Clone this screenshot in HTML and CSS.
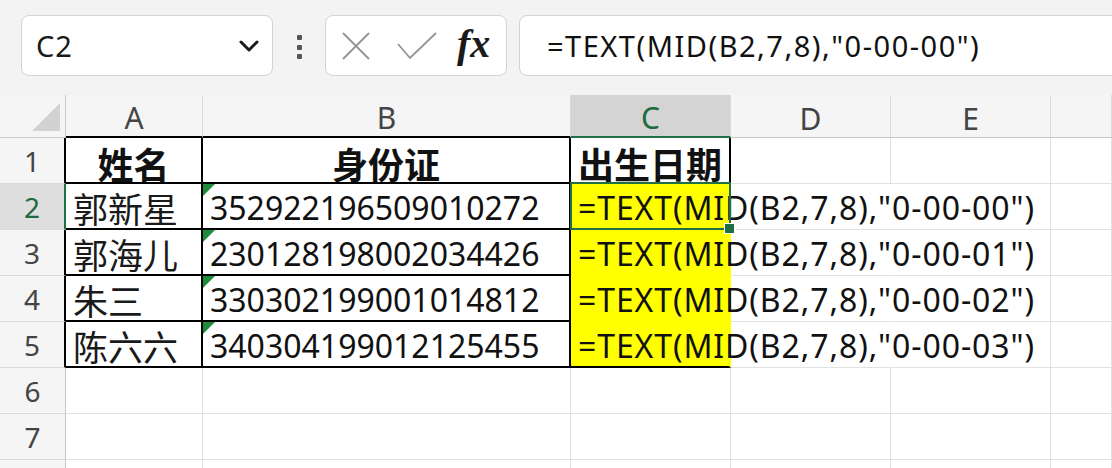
FILE: index.html
```html
<!DOCTYPE html>
<html lang="zh-CN">
<head>
<meta charset="utf-8">
<title>Sheet</title>
<link rel="stylesheet" href="styles.css">
</head>
<body>
<div class="app">
  <div class="toolbar">
    <div class="namebox">
      <span class="ref">C2</span>
      <svg class="chev" width="20" height="12" viewBox="0 0 20 12"><polyline points="2,2 10,10 18,2" fill="none" stroke="#1a1a1a" stroke-width="3" stroke-linecap="round" stroke-linejoin="round"/></svg>
    </div>
    <div class="dots"><i></i><i></i><i></i></div>
    <div class="fnbox">
      <svg class="ico-x" width="28" height="28" viewBox="0 0 28 28"><path d="M1 1L27 27M27 1L1 27" stroke="#949494" stroke-width="1.8" fill="none"/></svg>
      <svg class="ico-ok" width="40" height="28" viewBox="0 0 40 28"><polyline points="1,12 13,26 39,1" fill="none" stroke="#949494" stroke-width="1.8"/></svg>
      <span class="fx">fx</span>
    </div>
    <div class="formula">=TEXT(MID(B2,7,8),"0-00-00")</div>
  </div>

  <div class="sheet">
    <!-- header row -->
    <div class="cell corner"><svg width="28" height="28" viewBox="0 0 28 28"><polygon points="0,28 28,28 28,0" fill="#d2d2d2"/></svg></div>
    <div class="cell colhd blk">A</div>
    <div class="cell colhd blk">B</div>
    <div class="cell colhd sel">C</div>
    <div class="cell colhd">D</div>
    <div class="cell colhd">E</div>
    <div class="cell colhd"></div>

    <!-- row 1 -->
    <div class="cell rowhd blk">1</div>
    <div class="cell tb hd">姓名</div>
    <div class="cell tb hd">身份证</div>
    <div class="cell tb hd">出生日期</div>
    <div class="cell"></div>
    <div class="cell"></div>
    <div class="cell"></div>

    <!-- row 2 -->
    <div class="cell rowhd sel">2</div>
    <div class="cell tb zh">郭新星</div>
    <div class="cell tb num">352922196509010272</div>
    <div class="cell tb yellow cmid fml active">=TEXT(MID(B2,7,8),"0-00-00")</div>
    <div class="cell noright"></div>
    <div class="cell"></div>
    <div class="cell"></div>

    <!-- row 3 -->
    <div class="cell rowhd blk">3</div>
    <div class="cell tb zh">郭海儿</div>
    <div class="cell tb num">230128198002034426</div>
    <div class="cell tb yellow cmid fml">=TEXT(MID(B2,7,8),"0-00-01")</div>
    <div class="cell noright"></div>
    <div class="cell"></div>
    <div class="cell"></div>

    <!-- row 4 -->
    <div class="cell rowhd blk">4</div>
    <div class="cell tb zh">朱三</div>
    <div class="cell tb num">330302199001014812</div>
    <div class="cell tb yellow cmid fml">=TEXT(MID(B2,7,8),"0-00-02")</div>
    <div class="cell noright"></div>
    <div class="cell"></div>
    <div class="cell"></div>

    <!-- row 5 -->
    <div class="cell rowhd blk">5</div>
    <div class="cell tb zh">陈六六</div>
    <div class="cell tb num">340304199012125455</div>
    <div class="cell tb yellow clast fml">=TEXT(MID(B2,7,8),"0-00-03")</div>
    <div class="cell noright"></div>
    <div class="cell"></div>
    <div class="cell"></div>

    <!-- row 6 -->
    <div class="cell rowhd">6</div>
    <div class="cell"></div>
    <div class="cell"></div>
    <div class="cell"></div>
    <div class="cell"></div>
    <div class="cell"></div>
    <div class="cell"></div>

    <!-- row 7 -->
    <div class="cell rowhd">7</div>
    <div class="cell"></div>
    <div class="cell"></div>
    <div class="cell"></div>
    <div class="cell"></div>
    <div class="cell"></div>
    <div class="cell"></div>

    <!-- row 8 (only its top edge is in view) -->
    <div class="cell rowhd"></div>
    <div class="cell"></div>
    <div class="cell"></div>
    <div class="cell"></div>
    <div class="cell"></div>
    <div class="cell"></div>
    <div class="cell"></div>
  </div>
</div>
</body>
</html>
```

FILE: styles.css
```css
* { box-sizing: border-box; }

html, body {
  margin: 0;
  padding: 0;
}

body {
  width: 1112px;
  height: 468px;
  overflow: hidden;
  background: #ffffff;
  font-family: "Noto Sans", "Noto Sans CJK SC", sans-serif;
  color: #111;
}

.app {
  width: 1112px;
  height: 468px;
  overflow: hidden;
}

/* ---------- toolbar ---------- */
.toolbar {
  height: 95px;
  display: flex;
  align-items: flex-start;
  padding: 15px 0 0 21px;
  background: #f3f3f3;
  overflow: hidden;
}

.namebox {
  flex: none;
  width: 252px;
  height: 61px;
  background: #fff;
  border: 1px solid #d3d3d3;
  border-radius: 8px;
  display: flex;
  align-items: center;
  justify-content: space-between;
  padding: 0 13px 0 14px;
}

.ref {
  font-size: 29px;
  letter-spacing: 1px;
  color: #1a1a1a;
}

.dots {
  flex: none;
  margin: 20px 0 0 24px;
  display: flex;
  flex-direction: column;
  gap: 4.5px;
}

.dots i {
  display: block;
  width: 5px;
  height: 5px;
  background: #555;
  border-radius: 1px;
}

.fnbox {
  flex: none;
  margin-left: 23px;
  width: 182px;
  height: 61px;
  background: #fff;
  border: 1px solid #d3d3d3;
  border-radius: 8px;
  display: flex;
  align-items: center;
  padding-left: 16px;
}

.ico-ok {
  margin-left: 27px;
}

.fx {
  margin-left: 20px;
  font-family: "Liberation Serif", "DejaVu Serif", serif;
  font-style: italic;
  font-weight: 700;
  font-size: 40px;
  line-height: 1;
  color: #1a1a1a;
  margin-top: -4px;
}

.formula {
  flex: none;
  margin-left: 12px;
  width: 640px;
  height: 61px;
  background: #fff;
  border: 1px solid #d3d3d3;
  border-radius: 8px;
  display: flex;
  align-items: center;
  padding-left: 27px;
  font-size: 29px;
  letter-spacing: 1.5px;
  color: #111;
  white-space: nowrap;
}

/* ---------- sheet grid ---------- */
.sheet {
  display: grid;
  grid-template-columns: 66px 137px 368px 160px 160px 160px 61px;
  grid-template-rows: 43px repeat(8, 46px);
  background: #fff;
}

.cell {
  border-right: 1px solid #e1e1e1;
  border-bottom: 1px solid #e1e1e1;
  display: flex;
  align-items: center;
  padding-left: 7px;
  white-space: nowrap;
  font-size: 32px;
  line-height: 1.15;
  color: #111;
}

.corner {
  background: #f5f5f5;
  border-right-color: #c8c8c8;
  border-bottom-color: #c8c8c8;
  justify-content: flex-end;
  align-items: flex-end;
  padding: 0 5px 6px 0;
}

.colhd {
  background: #f5f5f5;
  border-right-color: #dadada;
  border-bottom-color: #c8c8c8;
  justify-content: center;
  padding: 6px 0 0 0;
  font-size: 30px;
  color: #444;
}

.colhd.blk {
  border-bottom: 2px solid #000;
}

.colhd.sel {
  background: #d4d4d4;
  color: #1e6b41;
  border-bottom: 2px solid #1e7145;
}

.rowhd {
  background: #f5f5f5;
  border-right-color: #c8c8c8;
  border-bottom-color: #dadada;
  justify-content: center;
  padding: 2px 0 0 0;
  font-size: 28px;
  color: #444;
}

.rowhd.blk {
  border-right: 2px solid #000;
}

.rowhd.sel {
  background: #dedede;
  color: #1e6b41;
  border-right: 2px solid #1e7145;
}

/* bordered table A1:C5 */
.tb {
  border-right: 2px solid #000;
  border-bottom: 2px solid #000;
}

.hd {
  justify-content: center;
  padding: 6px 0 0 0;
  font-family: "Noto Sans CJK SC", sans-serif;
  font-weight: 700;
  font-size: 36px;
  line-height: 1;
  color: #111;
}

.zh {
  font-family: "Noto Sans CJK SC", sans-serif;
  font-size: 35px;
  line-height: 1;
  padding-top: 3px;
  color: #1a1a1a;
}

.num {
  position: relative;
  padding-top: 4px;
  font-size: 32px;
}

.num::before {
  content: "";
  position: absolute;
  top: 0;
  left: 0;
  width: 0;
  height: 0;
  border-top: 12px solid #1f8b3d;
  border-right: 12px solid transparent;
}

.yellow {
  background: #ffff00;
}

.cmid {
  border-right-color: transparent;
  border-bottom-color: transparent;
}

.clast {
  border-right-color: transparent;
}

.fml {
  padding-top: 4px;
  letter-spacing: 0.9px;
}

.noright {
  border-right-color: transparent;
}

/* active cell selection */
.active {
  position: relative;
}

.active::after {
  content: "";
  position: absolute;
  top: -2px;
  left: -1px;
  right: -2px;
  bottom: -2px;
  border: 2px solid #1e6f42;
  pointer-events: none;
}

.active::before {
  content: "";
  position: absolute;
  right: -6px;
  bottom: -6px;
  width: 9px;
  height: 9px;
  background: #1e6f42;
  border: 1px solid #fff;
  z-index: 2;
}
```
